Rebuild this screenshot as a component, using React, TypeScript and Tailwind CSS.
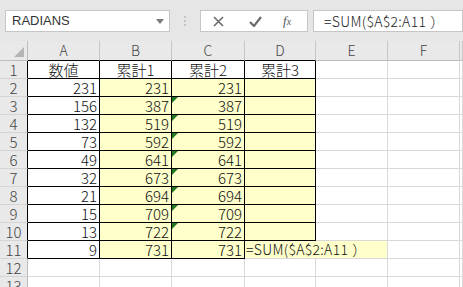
import React from "react";

const nums = [231, 156, 132, 73, 49, 32, 21, 15, 13, 9];
const sums = [231, 387, 519, 592, 641, 673, 694, 709, 722, 731];

const GRID = "border-r border-b border-[#d9d9d9]";
const BLACK = "border-r border-b border-black";
const font = { fontFamily: '"Noto Sans CJK JP", "Liberation Sans", sans-serif' };

function GreenMark() {
  return (
    <svg className="absolute left-0 top-0" width="6" height="6" viewBox="0 0 6 6">
      <polygon points="0,0 6,0 0,6" fill="#217a21" />
    </svg>
  );
}

function Formula() {
  return (
    <>
      =SUM($A$2:A11<span className="ml-[4px]">）</span>
    </>
  );
}

export default function App() {
  const rows = [];
  for (let r = 1; r <= 13; r++) {
    const inTable = r <= 11;
    rows.push(
      <div
        key={`h${r}`}
        className={`h-[18px] bg-[#e9e9e9] text-[#444] text-[15px] leading-[17px] text-center border-b border-r border-b-[#d4d4d4] ${
          inTable ? "border-r-black" : "border-r-[#bdbdbd]"
        }`}
      >
        {r}
      </div>
    );
    // A
    rows.push(
      <div
        key={`a${r}`}
        className={`h-[18px] text-[15px] leading-[17px] ${inTable ? BLACK : GRID} ${
          r === 1 ? "text-center" : "text-right pr-[2px]"
        }`}
      >
        {r === 1 ? "数値" : inTable ? nums[r - 2] : ""}
      </div>
    );
    // B, C
    for (const c of ["B", "C"]) {
      rows.push(
        <div
          key={`${c}${r}`}
          className={`relative h-[18px] text-[15px] leading-[17px] ${inTable ? BLACK : GRID} ${
            r === 1 ? "text-center" : inTable ? "text-right pr-[2px] bg-[#ffffcc]" : ""
          }`}
        >
          {c === "C" && r >= 3 && r <= 10 && <GreenMark />}
          {r === 1 ? (c === "B" ? "累計1" : "累計2") : inTable ? sums[r - 2] : ""}
        </div>
      );
    }
    // D (+E)
    if (r === 11) {
      rows.push(
        <div
          key="d11"
          className="col-span-2 h-[18px] text-[14px] leading-[17px] bg-[#ffffcc] border-r border-b border-[#d9d9d9] pl-[1px] tracking-[0.3px] whitespace-nowrap"
        >
          <Formula />
        </div>
      );
    } else {
      rows.push(
        <div
          key={`d${r}`}
          className={`h-[18px] text-[15px] leading-[17px] ${inTable ? BLACK : GRID} ${
            r === 1 ? "text-center" : inTable ? "bg-[#ffffcc]" : ""
          }`}
        >
          {r === 1 ? "累計3" : ""}
        </div>
      );
      rows.push(<div key={`e${r}`} className={`h-[18px] ${GRID}`} />);
    }
    rows.push(<div key={`f${r}`} className={`h-[18px] ${GRID}`} />);
    rows.push(<div key={`g${r}`} className={`h-[18px] ${GRID}`} />);
  }

  return (
    <div className="w-[463px] h-[287px] overflow-hidden bg-white text-[#111] font-light" style={font}>
      {/* formula bar */}
      <div className="h-[41px] bg-[#e6e6e6] flex items-start pt-[10px]">
        <div className="ml-[5px] w-[165px] h-[22px] bg-white border border-[#c6c6c6] flex items-center justify-between pl-[6px] pr-[5px]">
          <span className="text-[13px] text-[#333]" style={{ fontFamily: '"Liberation Sans", sans-serif' }}>
            RADIANS
          </span>
          <svg width="8" height="5" viewBox="0 0 8 5">
            <polygon points="0,0 8,0 4,5" fill="#7a7a7a" />
          </svg>
        </div>
        <div className="w-[30px] h-[22px] flex flex-col items-center justify-center gap-[2px]">
          <span className="w-[2px] h-[2px] bg-[#c4c4c4]" />
          <span className="w-[2px] h-[2px] bg-[#c4c4c4]" />
          <span className="w-[2px] h-[2px] bg-[#c4c4c4]" />
        </div>
        <div className="w-[108px] h-[22px] bg-white border border-[#c6c6c6] flex items-center">
          <svg className="ml-[12px]" width="11" height="11" viewBox="0 0 11 11">
            <path d="M1 1 L10 10 M10 1 L1 10" stroke="#6b6b6b" strokeWidth="1.6" />
          </svg>
          <svg className="ml-[25px]" width="13" height="11" viewBox="0 0 13 11">
            <path d="M1 6 L5 10 L12 1" stroke="#6b6b6b" strokeWidth="2.2" fill="none" />
          </svg>
          <span
            className="ml-[21px] text-[13px] italic text-[#555]"
            style={{ fontFamily: '"Liberation Serif", serif' }}
          >
            f<span className="text-[10px]">x</span>
          </span>
        </div>
        <div className="ml-[5px] flex-1 h-[22px] bg-white border border-[#c6c6c6] flex items-center pl-[10px]">
          <span className="text-[14px] text-[#222] tracking-[0.3px] whitespace-nowrap">
            <Formula />
          </span>
        </div>
      </div>
      {/* grid */}
      <div className="grid grid-cols-[28px_72px_72px_73px_71px_72px_72px_3px]">
        <div className="relative h-[20px] bg-[#e9e9e9] border-r border-b border-[#bdbdbd]">
          <svg className="absolute right-[3px] bottom-[3px]" width="10" height="10" viewBox="0 0 10 10">
            <polygon points="10,0 10,10 0,10" fill="#b5b5b5" />
          </svg>
        </div>
        {["A", "B", "C", "D", "E", "F", ""].map((l, i) => (
          <div
            key={`c${i}`}
            className={`h-[20px] bg-[#e9e9e9] text-[#444] text-[14px] leading-[19px] text-center border-r border-b border-r-[#c6c6c6] ${
              i < 4 ? "border-b-black" : "border-b-[#bdbdbd]"
            }`}
          >
            {l}
          </div>
        ))}
        {rows}
      </div>
    </div>
  );
}
